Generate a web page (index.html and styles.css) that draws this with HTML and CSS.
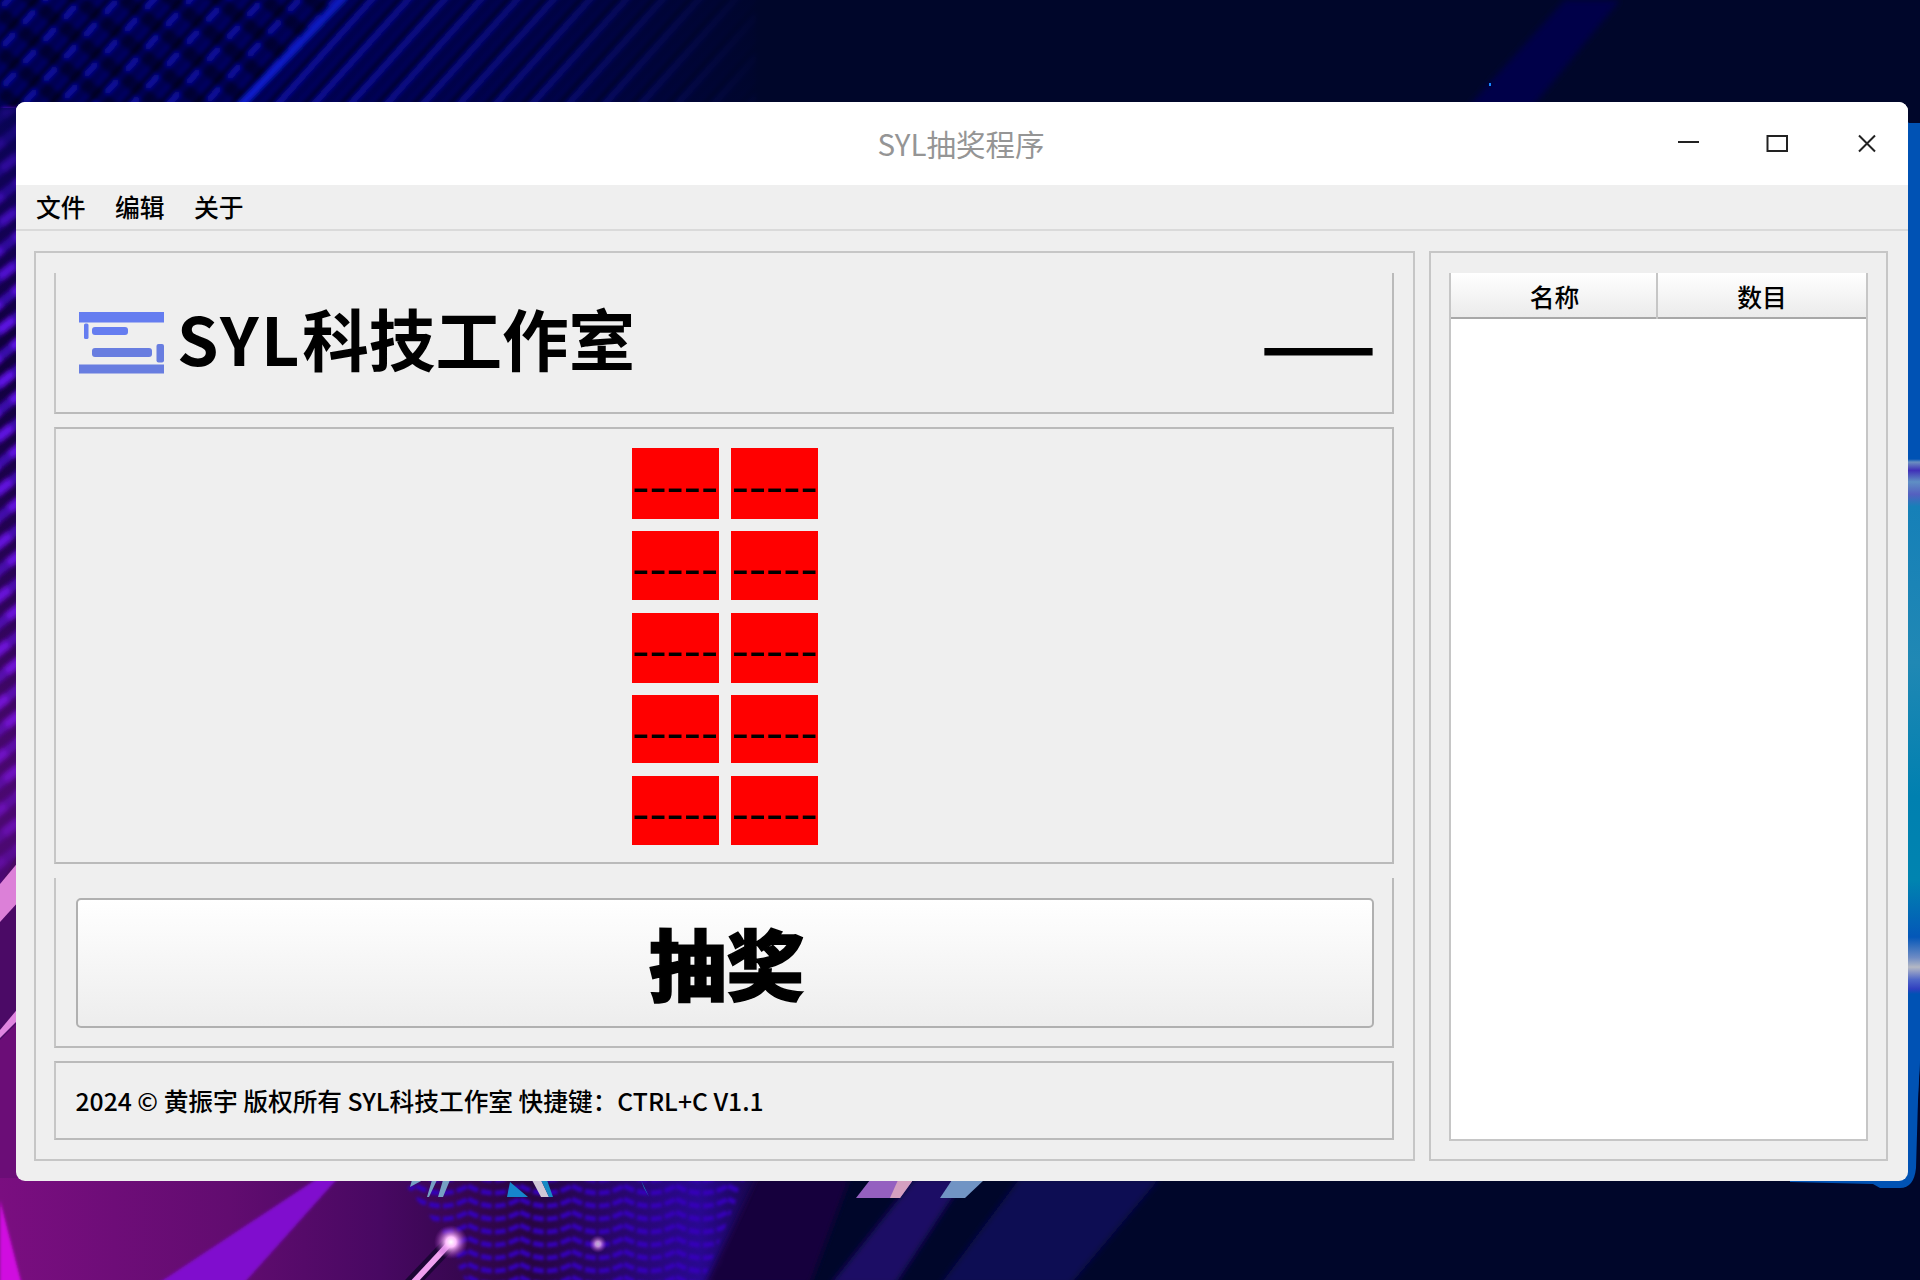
FILE: index.html
```
<!DOCTYPE html>
<html lang="zh-CN">
<head>
<meta charset="utf-8">
<title>SYL抽奖程序</title>
<link rel="stylesheet" href="styles.css">
</head>
<body>
<svg class="wallpaper" width="1920" height="1280" viewBox="0 0 1920 1280" aria-hidden="true">
  <defs>
    <pattern id="rays" width="27" height="60" patternUnits="userSpaceOnUse" patternTransform="rotate(42)">
      <rect width="27" height="60" fill="#020330"/>
      <rect x="3" width="6" height="60" fill="#0909a0"/>
      <rect x="9" width="10" height="60" fill="#020352"/>
      <rect x="19" width="4" height="60" fill="#040468"/>
    </pattern>
    <pattern id="weave" width="60" height="30" patternUnits="userSpaceOnUse" patternTransform="rotate(40)">
      <rect y="3" width="60" height="13" fill="#00021a" fill-opacity=".55"/>
    </pattern>
    <pattern id="edge" width="34" height="21" patternUnits="userSpaceOnUse" patternTransform="rotate(-38)">
      <rect width="34" height="21" fill="#0c0230"/>
      <rect y="4" width="34" height="8" fill="#3a0cb0"/>
      <rect y="4" width="18" height="8" fill="#6514f0"/>
    </pattern>
    <pattern id="ripple" width="52" height="13" patternUnits="userSpaceOnUse">
      <path d="M0 3Q26 17 52 3" fill="none" stroke="#3406b8" stroke-width="5" stroke-dasharray="11 3"/>
    </pattern>
    <linearGradient id="fadeRight"><stop offset="0" stop-color="#00062a" stop-opacity="0"/><stop offset=".55" stop-color="#00062a" stop-opacity=".35"/><stop offset="1" stop-color="#00062a"/></linearGradient>
    <linearGradient id="edgeTint" x2="0" y2="1"><stop offset="0" stop-color="#05055a" stop-opacity=".8"/><stop offset=".3" stop-color="#3000a0" stop-opacity=".1"/><stop offset=".75" stop-color="#8a10b0" stop-opacity=".4"/><stop offset="1" stop-color="#5a0a80" stop-opacity=".8"/></linearGradient>
    <linearGradient id="floor"><stop offset="0" stop-color="#7a0e80"/><stop offset=".3" stop-color="#620c70"/><stop offset=".5" stop-color="#480862"/><stop offset=".7" stop-color="#280540"/><stop offset=".92" stop-color="#290890"/><stop offset="1" stop-color="#180645"/></linearGradient>
    <linearGradient id="arc" x2="0" y2="1"><stop offset="0" stop-color="#0052b4"/><stop offset=".324" stop-color="#0052b4"/><stop offset=".327" stop-color="#6b8fc0"/><stop offset=".335" stop-color="#4030b8"/><stop offset=".346" stop-color="#5f8fc4"/><stop offset=".358" stop-color="#5560c0"/><stop offset=".37" stop-color="#1680b8"/><stop offset=".52" stop-color="#2088b4"/><stop offset=".65" stop-color="#0080b0"/><stop offset=".73" stop-color="#0084b0"/><stop offset=".785" stop-color="#0457b8"/><stop offset=".805" stop-color="#6f8cc4"/><stop offset=".814" stop-color="#b4b8c4"/><stop offset=".826" stop-color="#5068c8"/><stop offset=".835" stop-color="#3040c0"/><stop offset=".84" stop-color="#0052b4"/><stop offset="1" stop-color="#0052b4"/></linearGradient>
    <radialGradient id="spark"><stop offset="0" stop-color="#fff"/><stop offset=".3" stop-color="#ffc0ff"/><stop offset="1" stop-color="#a030c0" stop-opacity="0"/></radialGradient>
    <filter id="soft"><feGaussianBlur stdDeviation="3"/></filter>
    <filter id="medium"><feGaussianBlur stdDeviation="2.2"/></filter>
    <filter id="slight"><feGaussianBlur stdDeviation="1.4"/></filter>
  </defs>
  <rect width="1920" height="1280" fill="#00062a"/>
  <g filter="url(#medium)">
    <rect x="-9" y="-9" width="765" height="124" fill="url(#rays)"/>
    <path d="M-9 -9H345L235 115H-9Z" fill="url(#weave)"/>
    <path d="M346 -5L238 108" stroke="#0a1bd0" stroke-width="7"/>
  </g>
  <rect x="250" width="530" height="125" fill="url(#fadeRight)"/>
  <path d="M1565 0H1620L1530 110H1465Z" fill="#02024a" filter="url(#soft)"/>
  <path d="M1489 83h2v3h-2z" fill="#1687ff"/>
  <rect x="-9" y="108" width="36" height="780" fill="url(#edge)" filter="url(#medium)"/>
  <rect y="108" width="20" height="780" fill="url(#edgeTint)"/>
  <path d="M0 884L20 850V1180H0Z" fill="#4b0a66"/>
  <path d="M0 884L20 860V900L0 922Z" fill="#dc80d8"/>
  <path d="M0 1030L20 1006V1018L0 1038Z" fill="#e085e0"/>
  <path d="M0 1040L20 1020V1190H0Z" fill="#6b0d77"/>
  <path d="M0 1178H760L715 1280H0Z" fill="url(#floor)"/>
  <path d="M400 1178H745L700 1290H470L440 1230Z" fill="url(#ripple)" filter="url(#slight)"/>
  <path d="M318 1178H338L238 1290H148Z" fill="#800dce" filter="url(#slight)"/>
  <path d="M0 1200L22 1285H0Z" fill="#d00ae0" filter="url(#slight)"/>
  <path d="M410 1285L450 1243" stroke="#1c0535" stroke-width="14"/>
  <path d="M412 1284L450 1243" stroke="#f0a0f0" stroke-width="6"/>
  <circle cx="451" cy="1242" r="17" fill="url(#spark)"/>
  <circle cx="598" cy="1244" r="9" fill="url(#spark)" opacity=".7"/>
  <circle cx="726" cy="1266" r="8" fill="url(#spark)" opacity=".35"/>
  <path d="M757 1178H850L810 1285H705Z" fill="#18063e" filter="url(#soft)"/>
  <path d="M915 1178H965L895 1285H830Z" fill="#1b0865" filter="url(#soft)"/>
  <path d="M1020 1178H1160L1070 1285H940Z" fill="#0c0a52" filter="url(#soft)"/>
  <path d="M412 1180H423L410 1187ZM432 1180H437L429 1197H427ZM443 1180H450L443 1197H438Z" fill="#76a1c4"/>
  <path d="M510 1182L528 1197H507Z" fill="#1686cc"/>
  <path d="M532 1180H541L549 1197H541Z" fill="#d0c8d7"/>
  <path d="M541 1180H547L553 1197H549ZM641 1180L649 1197L644 1188Z" fill="#168ac4"/>
  <path d="M870 1180H913L900 1198H856Z" fill="#9460c0"/>
  <path d="M898 1180H913L900 1198H890Z" fill="#d4a0c0"/>
  <path d="M952 1180H984L965 1198H940Z" fill="#7194c4"/>
  <path d="M1900 115L1909 123L1920 127V1059L1918 1100L1916 1168Q1914 1188 1900 1188H1880L1873 1184L1790 1182V1170H1900Z" fill="#0052b4"/>
  <path d="M1900 123H1920V1059L1914 1160H1900Z" fill="url(#arc)"/>
</svg>

<main class="window">
  <header class="titlebar">
    <h1 class="title">SYL抽奖程序</h1>
    <svg class="controls" width="202" height="24" viewBox="0 0 202 24" fill="none" stroke="#222" stroke-width="2">
      <path d="M1 11H22"/>
      <path d="M90.500 5H110V20H90.500Z"/>
      <path d="M182 4.500L198 20.500M198 4.500L182 20.500"/>
    </svg>
  </header>
  <nav class="menubar"><span>文件</span><span>编辑</span><span>关于</span></nav>
  <div class="content">
    <section class="panel main-panel">
      <div class="box brand">
        <svg class="logo" width="85" height="62" viewBox="0 0 85 62" fill="#657df0">
          <rect width="85" height="10.500"/>
          <rect x="5" y="11.500" width="4.500" height="15.500" rx="1.500"/>
          <rect x="13" y="15" width="36" height="8" rx="3"/>
          <g fill="#687de0">
            <rect x="13" y="36" width="60" height="9" rx="3"/>
            <rect x="77.500" y="32" width="7.500" height="18.500" rx="2"/>
            <rect y="52.500" width="85" height="9"/>
          </g>
        </svg>
        <span class="studio"><span class="latin">SYL</span>科技工作室</span>
        <span class="result">——</span>
      </div>
      <div class="box board">
        <div class="slot">-----</div><div class="slot">-----</div>
        <div class="slot">-----</div><div class="slot">-----</div>
        <div class="slot">-----</div><div class="slot">-----</div>
        <div class="slot">-----</div><div class="slot">-----</div>
        <div class="slot">-----</div><div class="slot">-----</div>
      </div>
      <div class="box action"><button class="draw">抽奖</button></div>
      <footer class="box copyright">2024 © 黄振宇 版权所有 SYL科技工作室 快捷键：CTRL+C V1.1</footer>
    </section>
    <aside class="panel side-panel">
      <div class="table">
        <div class="thead"><span>名称</span><span>数目</span></div>
      </div>
    </aside>
  </div>
</main>
</body>
</html>
```
FILE: styles.css
```
* { box-sizing: border-box; }
body {
  margin: 0;
  width: 1920px;
  height: 1280px;
  overflow: hidden;
  padding: 102px 12px 99px 16px;
  font-family: "Noto Sans CJK SC", sans-serif;
  font-size: 24.8px;
  font-weight: 500;
  color: #000;
  background: #00062a;
}
.wallpaper { position: absolute; left: 0; top: 0; z-index: -1; }
.window {
  height: 1079px;
  display: flex;
  flex-direction: column;
  background: #efefef;
  border-radius: 9px;
  overflow: hidden;
}
.titlebar {
  height: 83px;
  flex: none;
  display: grid;
  grid-template-columns: 1fr auto 1fr;
  align-items: center;
  background: #fff;
}
.title {
  grid-column: 2;
  margin: 0 2px 1px 0;
  font-size: 29.5px;
  font-weight: 400;
  line-height: 40px;
  color: #959595;
}
.controls { justify-self: end; margin: 0 29px 2px 0; }
.menubar {
  height: 46px;
  flex: none;
  display: flex;
  gap: 29.400px;
  padding-left: 20px;
  line-height: 42px;
  border-bottom: 2px solid #dadada;
}
.content {
  flex: 1;
  display: flex;
  gap: 14px;
  padding: 20px 20px 21px 18px;
}
.panel { border: 2px solid #c6c6c6; }
.main-panel {
  width: 1381px;
  padding: 20px 19px 18px 18px;
  display: flex;
  flex-direction: column;
}
.box { border: 2px solid #bababa; border-left-color: #c6c6c6; }
.brand {
  height: 141px;
  border-top: 0;
  display: flex;
  align-items: center;
  padding: 0 16px 0 23px;
}
.logo { flex: none; }
.studio { margin: 0 0 12px 13px; font-size: 66.6px; font-weight: 700; line-height: 90px; }
.latin { letter-spacing: 2.600px; }
.result { margin: 0 0 2px auto; font-size: 67px; font-weight: 900; line-height: 80px; }
.board {
  margin-top: 13px;
  height: 437px;
  display: grid;
  grid-template-columns: 87px 87px;
  grid-template-rows: 71px 69px 70px 68px 69px;
  column-gap: 12.500px;
  row-gap: 12.400px;
  justify-content: center;
  padding: 19px 0 0 2px;
}
.slot {
  background: #f00;
  font-size: 49.7px;
  font-weight: 400;
  line-height: 66px;
  text-align: center;
  white-space: nowrap;
}
.slot:nth-child(-n+2) { line-height: 69px; }
.action {
  margin-top: 14px;
  height: 170px;
  border-top: 0;
  padding: 20px 18px 19px 20px;
}
.draw {
  display: block;
  width: 100%;
  height: 130px;
  padding: 0 0 4px 3px;
  font: 900 77.500px/120px "Noto Sans CJK SC", sans-serif;
  -webkit-text-stroke: 1.600px #000;
  color: #000;
  background: linear-gradient(#fff, #ededed);
  border: 2px solid #b0b0b0;
  border-radius: 5px;
}
.copyright {
  margin-top: 13px;
  height: 79px;
  padding-left: 19.500px;
  font-size: 24.700px;
  line-height: 74px;
}
.side-panel { flex: 1; padding: 20px 18px 18px 18px; }
.table { height: 868px; background: #fff; border: 2px solid #c6c6c6; border-top: 0; }
.thead {
  height: 46px;
  display: grid;
  grid-template-columns: 207px 1fr;
  text-align: center;
  line-height: 46px;
  background: linear-gradient(#fff, #ebebeb);
  border-bottom: 2px solid #a8a8a8;
}
.thead span:first-child { border-right: 2px solid #c6c6c6; padding-left: 2px; }
```
